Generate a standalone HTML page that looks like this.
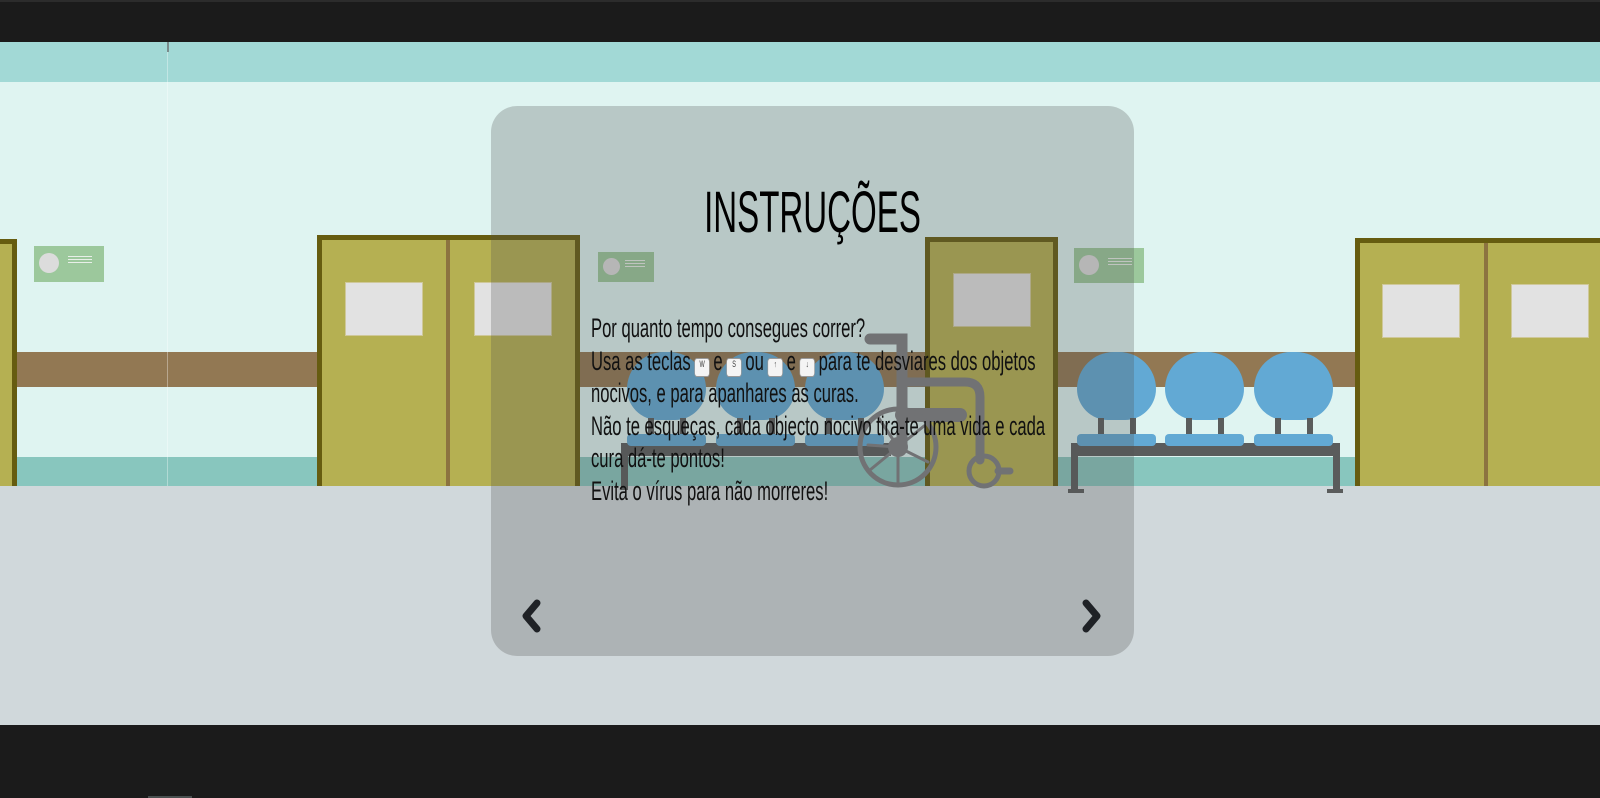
<!DOCTYPE html>
<html><head><meta charset="utf-8"><style>
*{margin:0;padding:0;box-sizing:border-box}
body{width:1600px;height:798px;overflow:hidden;background:#1b1b1b;position:relative;font-family:"Liberation Sans Narrow","Liberation Sans",sans-serif}
.a{position:absolute}
.door{position:absolute;background:#b5b052;border:5px solid #665c10;border-bottom:none}
.win{position:absolute;background:#e2e2e2;border:1px solid #cfc89a}
.div{position:absolute;width:4px;background:#8c7340}
.sign{position:absolute;background:#9cc89c}
.sign i{position:absolute;left:5px;top:7px;width:20px;height:20px;border-radius:50%;background:#dcdcdc}
.sign b{position:absolute;left:34px;top:10px;width:24px;height:9px;background:repeating-linear-gradient(#e8efe8 0 1px,transparent 1px 3px)}
.chair{position:absolute;width:79px;height:68px;background:#62a9d4;border-radius:38px 38px 32px 32px}
.seat{position:absolute;width:79px;height:12px;background:#62a9d4;border-radius:4px}
.post{position:absolute;width:6px;height:16px;background:#5a5c5c}
.key{display:inline-block;width:25px;height:19px;background:#f4f4f4;border:1px solid #999;border-radius:4px;font-size:9px;line-height:11px;text-align:center;vertical-align:3px;margin:0 6px;font-family:"Liberation Sans",sans-serif;color:#333}
</style></head><body>
<div class="a" style="left:0;top:0;width:1600px;height:2px;background:#2c2c2c"></div>
<div class="a" style="left:0;top:42px;width:1600px;height:40px;background:#a2d9d6"></div>
<div class="a" style="left:0;top:82px;width:1600px;height:404px;background:#dff4f1"></div>
<div class="a" style="left:0;top:352px;width:1600px;height:35px;background:#927853"></div>
<div class="a" style="left:0;top:457px;width:1600px;height:29px;background:#88c6be"></div>
<div class="a" style="left:0;top:486px;width:1600px;height:239px;background:#d0d8db"></div>
<div class="a" style="left:167px;top:42px;width:1px;height:444px;background:rgba(255,255,255,0.35)"></div>
<div class="a" style="left:167px;top:42px;width:2px;height:10px;background:#7a8c8c"></div>

<div class="door" style="left:-10px;top:239px;width:27px;height:247px"></div>
<div class="sign" style="left:34px;top:246px;width:70px;height:36px"><i></i><b></b></div>

<div class="door" style="left:317px;top:235px;width:263px;height:251px"></div>
<div class="div" style="left:446px;top:240px;height:246px"></div>
<div class="win" style="left:345px;top:282px;width:78px;height:54px"></div>
<div class="win" style="left:474px;top:282px;width:78px;height:54px"></div>
<div class="sign" style="left:598px;top:252px;width:56px;height:30px"><i style="width:17px;height:17px;top:6px"></i><b style="left:27px;width:20px;top:8px"></b></div>

<div class="chair" style="left:627px;top:352px"></div>
<div class="chair" style="left:716px;top:352px"></div>
<div class="chair" style="left:805px;top:352px"></div>
<div class="post" style="left:648px;top:418px"></div><div class="post" style="left:680px;top:418px"></div>
<div class="post" style="left:737px;top:418px"></div><div class="post" style="left:769px;top:418px"></div>
<div class="post" style="left:826px;top:418px"></div><div class="post" style="left:858px;top:418px"></div>
<div class="a" style="left:621px;top:443px;width:270px;height:13px;background:#5a5c5c"></div>
<div class="a" style="left:621px;top:443px;width:7px;height:47px;background:#5a5c5c"></div>
<div class="seat" style="left:627px;top:434px"></div>
<div class="seat" style="left:716px;top:434px"></div>
<div class="seat" style="left:805px;top:434px"></div>

<div class="door" style="left:925px;top:237px;width:133px;height:249px"></div>
<div class="win" style="left:953px;top:273px;width:78px;height:54px"></div>

<svg class="a" style="left:850px;top:330px" width="170" height="165">
<g fill="none" stroke="#7d7f82" stroke-linecap="round">
<path d="M20 9 H52 V117" stroke-width="11"/>
<path d="M52 52 H115 Q130 52 130 67 V130" stroke-width="9"/>
<path d="M52 85 H110" stroke-width="14"/>
<circle cx="48" cy="117" r="38" stroke-width="5"/>
<path d="M48 117 L28 87 M48 117 L74 96 M48 117 L78 132 M48 117 L48 155 M48 117 L20 140 M48 117 L18 115" stroke-width="3"/>
<circle cx="134" cy="141" r="15" stroke-width="5"/>
<path d="M148 141 H160" stroke-width="7"/>
</g>
<circle cx="48" cy="117" r="10" fill="#7d7f82"/>
</svg>

<div class="sign" style="left:1074px;top:248px;width:70px;height:35px"><i></i><b></b></div>
<div class="chair" style="left:1077px;top:352px"></div>
<div class="chair" style="left:1165px;top:352px"></div>
<div class="chair" style="left:1254px;top:352px"></div>
<div class="post" style="left:1098px;top:418px"></div><div class="post" style="left:1130px;top:418px"></div>
<div class="post" style="left:1186px;top:418px"></div><div class="post" style="left:1218px;top:418px"></div>
<div class="post" style="left:1275px;top:418px"></div><div class="post" style="left:1307px;top:418px"></div>
<div class="a" style="left:1071px;top:443px;width:269px;height:13px;background:#5a5c5c;border-radius:3px"></div>
<div class="a" style="left:1071px;top:443px;width:7px;height:47px;background:#5a5c5c"></div>
<div class="a" style="left:1333px;top:443px;width:7px;height:47px;background:#5a5c5c"></div>
<div class="a" style="left:1068px;top:489px;width:16px;height:4px;background:#5a5c5c"></div>
<div class="a" style="left:1327px;top:489px;width:16px;height:4px;background:#5a5c5c"></div>
<div class="seat" style="left:1077px;top:434px"></div>
<div class="seat" style="left:1165px;top:434px"></div>
<div class="seat" style="left:1254px;top:434px"></div>

<div class="door" style="left:1355px;top:238px;width:260px;height:248px"></div>
<div class="div" style="left:1484px;top:243px;height:243px"></div>
<div class="win" style="left:1382px;top:284px;width:78px;height:54px"></div>
<div class="win" style="left:1511px;top:284px;width:78px;height:54px"></div>

<div class="a" style="left:491px;top:106px;width:643px;height:550px;border-radius:26px;background:rgba(80,80,80,0.27)"></div>
<div class="a" style="left:491px;top:183px;width:643px;text-align:center;font-size:58px;color:#000;transform:scaleX(0.57);line-height:60px">INSTRUÇÕES</div>
<div class="a" style="left:591px;top:312px;width:800px;font-size:27px;line-height:32.5px;color:#111;transform:scaleX(0.615);transform-origin:0 0;white-space:nowrap">
Por quanto tempo consegues correr?<br>
Usa as teclas<span class="key">W</span>e<span class="key">S</span>ou<span class="key">↑</span>e<span class="key">↓</span>para te desviares dos objetos<br>
nocivos, e para apanhares as curas.<br>
Não te esqueças, cada objecto nocivo tira-te uma vida e cada<br>
cura dá-te pontos!<br>
Evita o vírus para não morreres!
</div>
<svg class="a" style="left:520px;top:599px" width="24" height="34"><path d="M17 4 L6 17 L17 30" fill="none" stroke="#1f2226" stroke-width="7" stroke-linecap="round" stroke-linejoin="round"/></svg>
<svg class="a" style="left:1080px;top:599px" width="24" height="34"><path d="M6 4 L17 17 L6 30" fill="none" stroke="#1f2226" stroke-width="7" stroke-linecap="round" stroke-linejoin="round"/></svg>

<div class="a" style="left:148px;top:796px;width:44px;height:2px;background:#4a5050"></div>
</body></html>
